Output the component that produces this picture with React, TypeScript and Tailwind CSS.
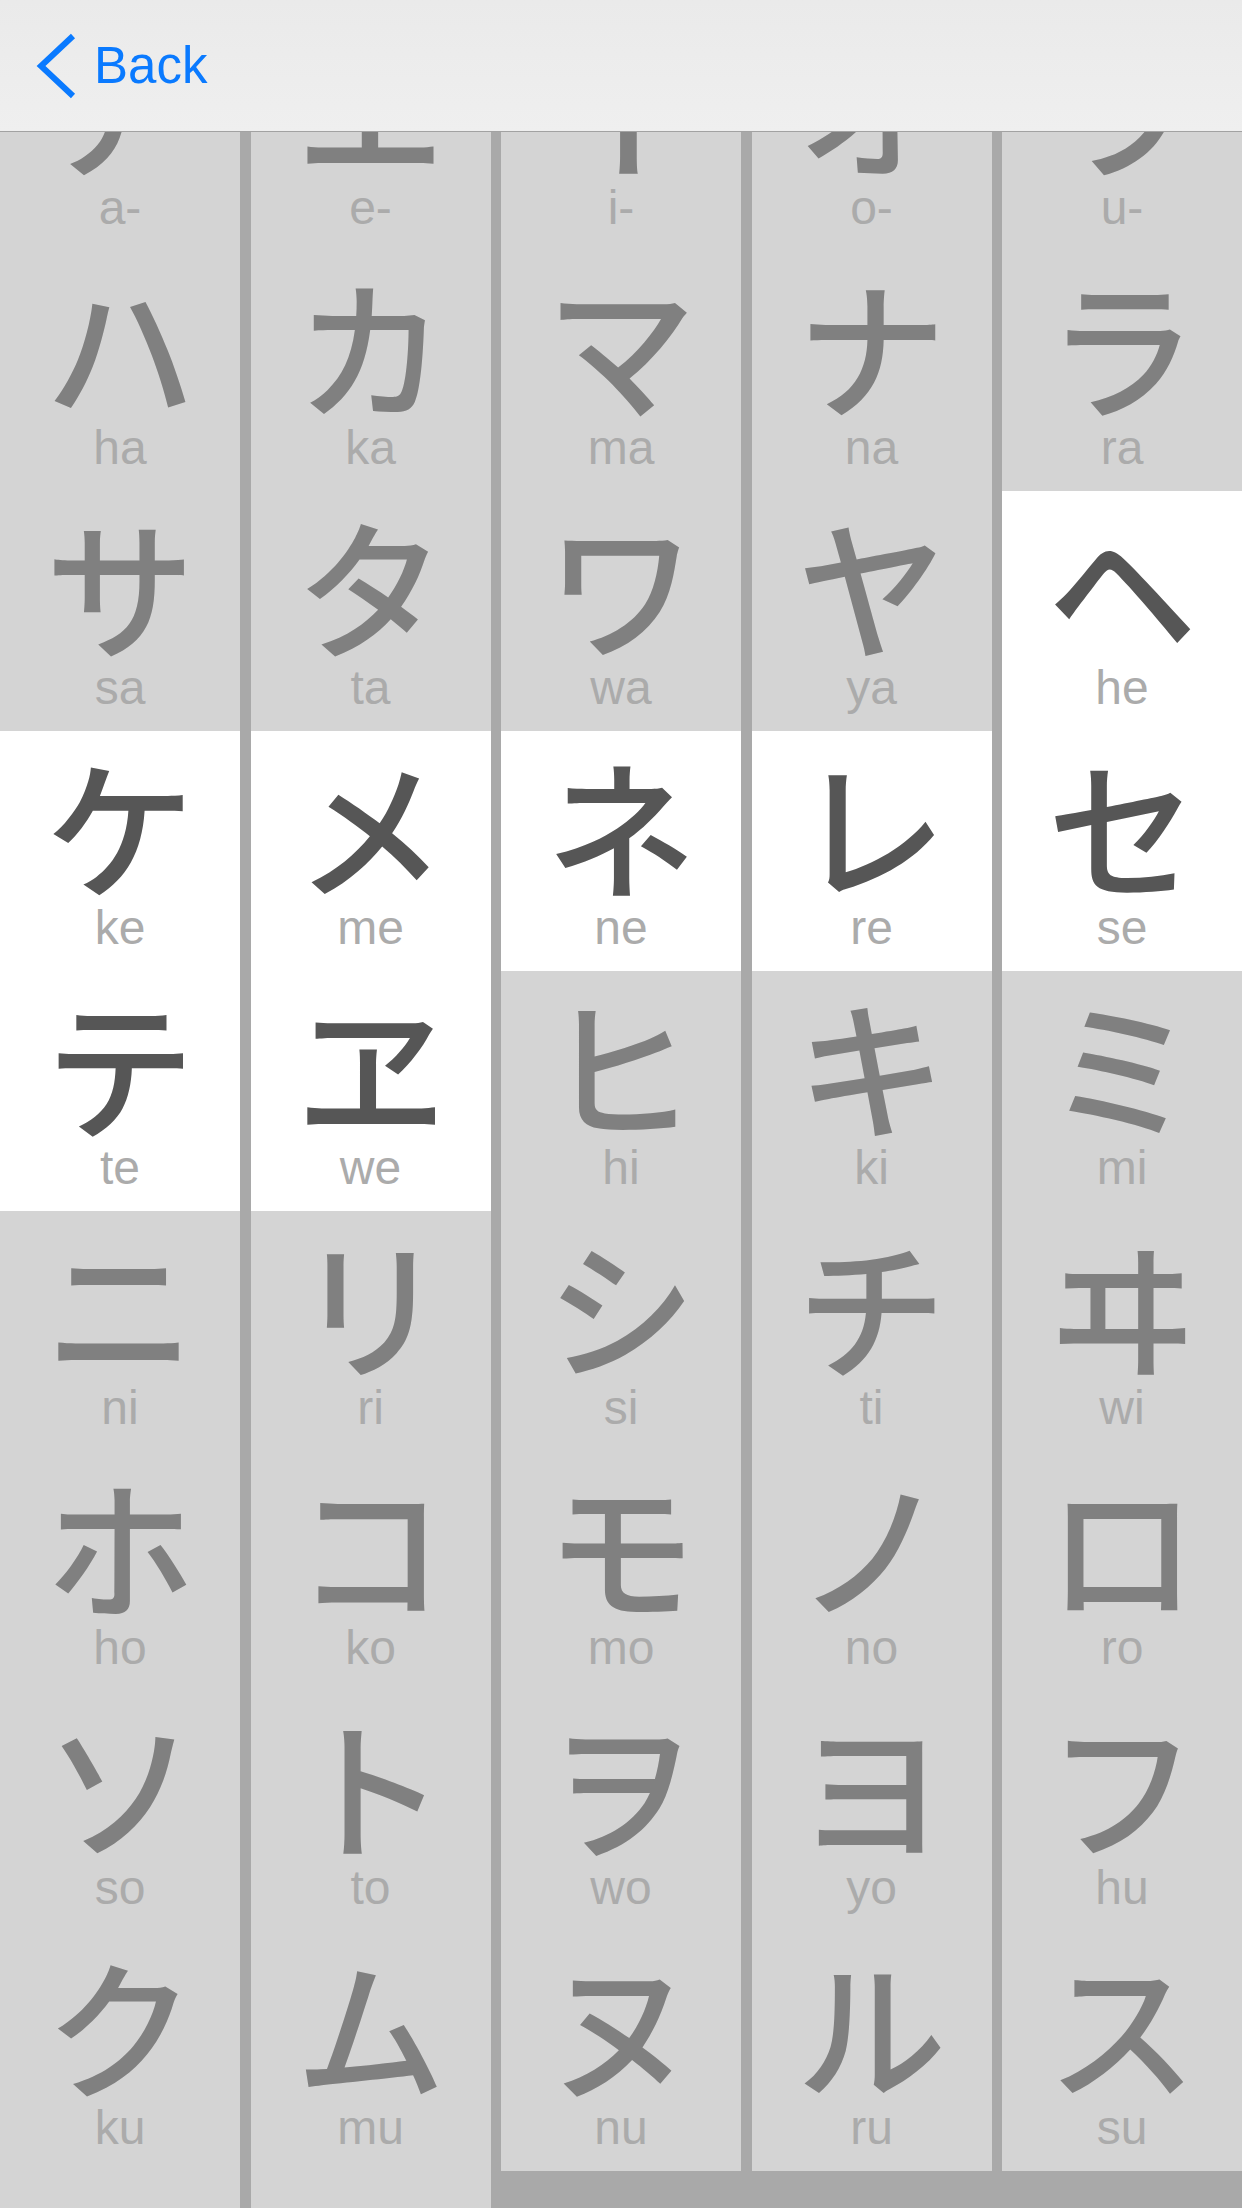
import React from "react";

type Kana = { char: string; romaji: string; learned?: boolean };

const columns: Kana[][] = [
  [
    { char: "ア", romaji: "a-" },
    { char: "ハ", romaji: "ha" },
    { char: "サ", romaji: "sa" },
    { char: "ケ", romaji: "ke", learned: true },
    { char: "テ", romaji: "te", learned: true },
    { char: "ニ", romaji: "ni" },
    { char: "ホ", romaji: "ho" },
    { char: "ソ", romaji: "so" },
    { char: "ク", romaji: "ku" },
    { char: "ツ", romaji: "tu" },
  ],
  [
    { char: "エ", romaji: "e-" },
    { char: "カ", romaji: "ka" },
    { char: "タ", romaji: "ta" },
    { char: "メ", romaji: "me", learned: true },
    { char: "ヱ", romaji: "we", learned: true },
    { char: "リ", romaji: "ri" },
    { char: "コ", romaji: "ko" },
    { char: "ト", romaji: "to" },
    { char: "ム", romaji: "mu" },
    { char: "ユ", romaji: "yu" },
  ],
  [
    { char: "イ", romaji: "i-" },
    { char: "マ", romaji: "ma" },
    { char: "ワ", romaji: "wa" },
    { char: "ネ", romaji: "ne", learned: true },
    { char: "ヒ", romaji: "hi" },
    { char: "シ", romaji: "si" },
    { char: "モ", romaji: "mo" },
    { char: "ヲ", romaji: "wo" },
    { char: "ヌ", romaji: "nu" },
  ],
  [
    { char: "オ", romaji: "o-" },
    { char: "ナ", romaji: "na" },
    { char: "ヤ", romaji: "ya" },
    { char: "レ", romaji: "re", learned: true },
    { char: "キ", romaji: "ki" },
    { char: "チ", romaji: "ti" },
    { char: "ノ", romaji: "no" },
    { char: "ヨ", romaji: "yo" },
    { char: "ル", romaji: "ru" },
  ],
  [
    { char: "ウ", romaji: "u-" },
    { char: "ラ", romaji: "ra" },
    { char: "ヘ", romaji: "he", learned: true },
    { char: "セ", romaji: "se", learned: true },
    { char: "ミ", romaji: "mi" },
    { char: "ヰ", romaji: "wi" },
    { char: "ロ", romaji: "ro" },
    { char: "フ", romaji: "hu" },
    { char: "ス", romaji: "su" },
  ],
];

const KanaCell = ({ kana }: { kana: Kana }) => {
  return (
    <div
      className={`h-[240px] flex flex-col items-center ${
        kana.learned ? "bg-white" : "bg-[#d4d4d4]"
      }`}
    >
      <div
        className={`pt-[17px] text-[150px] leading-none font-medium font-['Noto_Sans_CJK_JP',sans-serif] ${
          kana.learned ? "text-[#565656]" : "text-[#808080]"
        }`}
      >
        {kana.char}
      </div>
      <div className="mt-[6px] text-[48px] leading-none text-[#ababab] font-['Liberation_Sans',Arial,sans-serif]">
        {kana.romaji}
      </div>
    </div>
  );
};

const App = () => {
  return (
    <div className="relative w-[1242px] h-[2208px] overflow-hidden bg-[#a9a9a9]">
      {/* kana columns */}
      <div className="grid grid-cols-5 gap-x-[10.5px] items-start pt-[11px]">
        {columns.map((col, i) => (
          <div key={i} className="flex flex-col">
            {col.map((kana) => (
              <KanaCell key={kana.romaji} kana={kana} />
            ))}
          </div>
        ))}
      </div>

      {/* nav bar */}
      <div className="absolute top-0 left-0 right-0 h-[132px] bg-gradient-to-b from-[#eaeaea] to-[#efefef] border-b border-[#a2a2a2] flex items-center pl-[35px]">
        <button className="flex items-center gap-[17px] text-[#0a7aff]">
          <svg width="42" height="66" viewBox="0 0 42 66" fill="none">
            <polyline
              points="38,3 6,33 38,63"
              stroke="currentColor"
              strokeWidth="6"
              strokeLinejoin="miter"
            />
          </svg>
          <span className="text-[51px] leading-none font-['Liberation_Sans',Arial,sans-serif]">
            Back
          </span>
        </button>
      </div>
    </div>
  );
};

export default App;
